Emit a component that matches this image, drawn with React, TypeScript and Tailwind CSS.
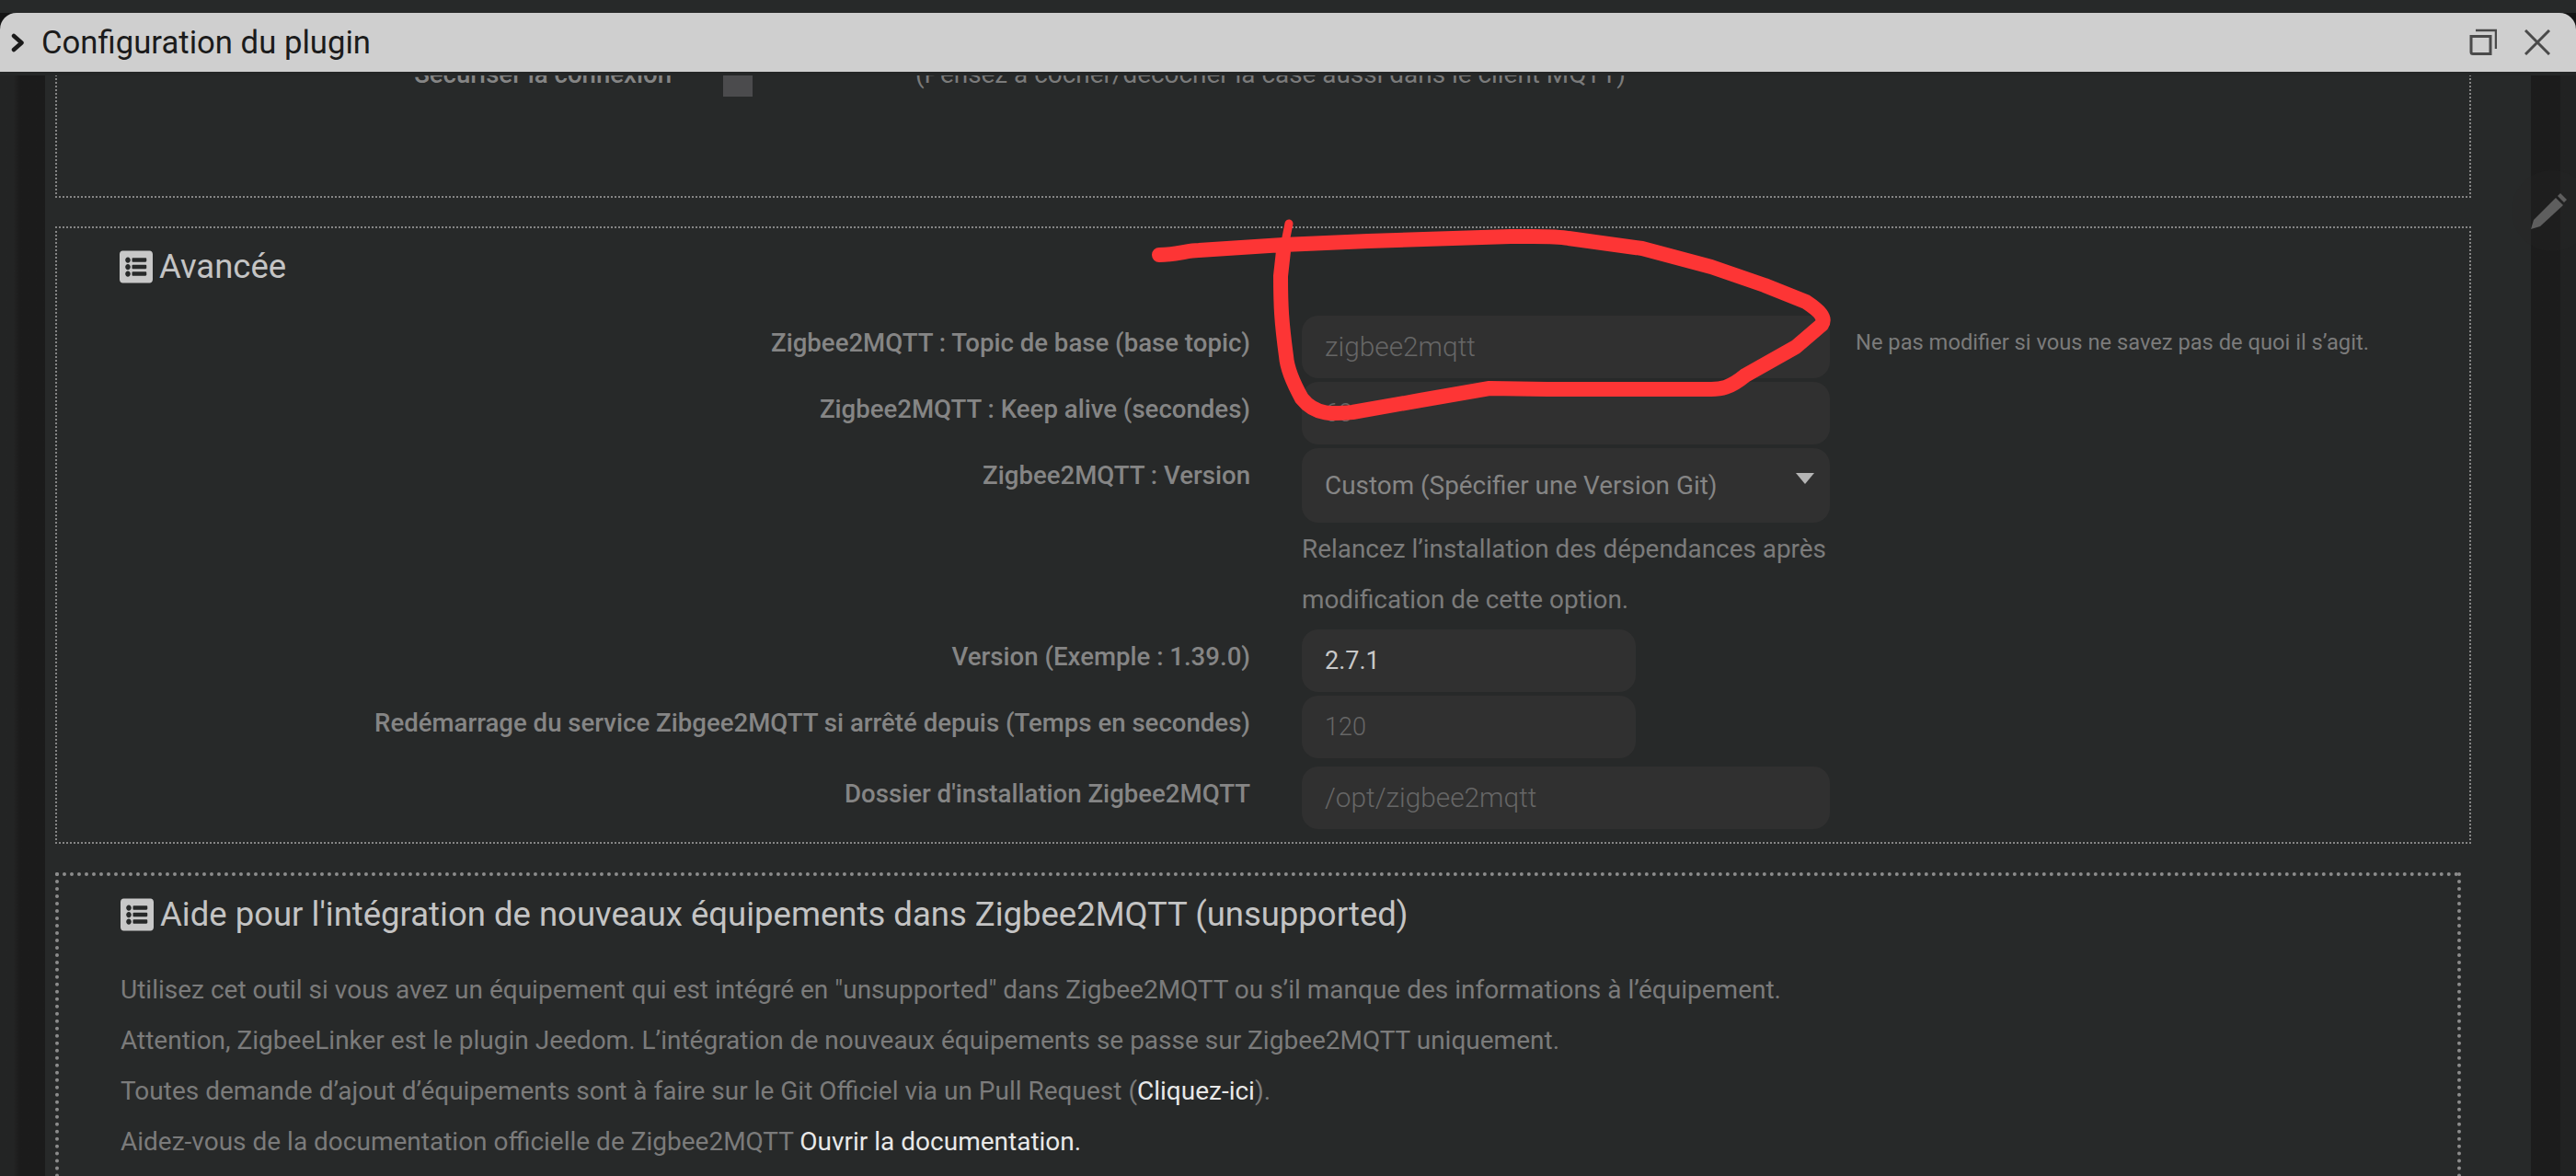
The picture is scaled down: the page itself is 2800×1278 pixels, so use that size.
import { FaListAlt } from "react-icons/fa";

const font = { fontFamily: "Roboto, sans-serif" };

function Heading({ children }: { children: React.ReactNode }) {
  return (
    <div className="flex items-center gap-[7px] text-[36.5px] leading-[44px] text-[#c4c4c4]">
      <FaListAlt preserveAspectRatio="none" className="w-[36px] h-[40px] text-[#c8c8c8] shrink-0" />
      <span>{children}</span>
    </div>
  );
}

function Row({ label, children, className }: { label: string; children: React.ReactNode; className?: string }) {
  return (
    <div className={`flex items-start ${className ?? ""}`}>
      <div className="w-[1297px] shrink-0 pt-[10px] text-right text-[27.6px] leading-[40px] font-medium text-[#858585]">
        {label}
      </div>
      <div className="ml-[56px]">{children}</div>
    </div>
  );
}

function Field({ value, wide = true, strong, digits }: { value: string; wide?: boolean; strong?: boolean; digits?: boolean }) {
  return (
    <div
      className={`h-[68px] rounded-[18px] bg-[#303030] pl-[25px] pt-[1px] flex items-center ${wide ? "w-[574px]" : "w-[363px]"} ${
        strong
          ? "text-[27px] text-[#c8c8c8] font-normal"
          : digits
            ? "text-[27px] font-light text-[#666666]"
            : "text-[29.8px] font-light text-[#666666]"
      }`}
    >
      {value}
    </div>
  );
}

export default function App() {
  return (
    <div className="relative w-[2800px] h-[1278px] overflow-hidden bg-[#272929]" style={font}>
      <div className="h-[14px] bg-[#272929]" />
      <div className="bg-[#141414]">
        <header className="relative z-10 h-[64px] rounded-t-[18px] bg-[#cfcfcf] flex items-center pl-[12px] pr-[28px] shadow-[0_4px_0_#252727]">
          <svg width="15" height="21" viewBox="0 0 15 21" fill="none" stroke="#1a1a1a" strokeWidth="4.5" strokeLinecap="round" strokeLinejoin="round">
            <path d="M3 3l8.5 7.5L3 18" />
          </svg>
          <span className="ml-[18px] text-[34.7px] text-[#1b1b1b] leading-none">Configuration du plugin</span>
          <div className="ml-auto flex items-center gap-[30px] text-[#4a4a4a]">
            <svg width="30" height="30" viewBox="0 0 30 30" fill="none" stroke="currentColor" strokeWidth="3">
              <path d="M2 8.5h21v19H4a2 2 0 0 1-2-2z" />
              <path d="M7 2h22v20" strokeWidth="2.5" />
            </svg>
            <svg width="28" height="28" viewBox="0 0 28 28" fill="none" stroke="currentColor" strokeWidth="3">
              <path d="M1 1l26 26M27 1L1 27" />
            </svg>
          </div>
        </header>
      </div>

      <div className="flex h-[1200px]">
        <div className="w-[49px] shrink-0 bg-gradient-to-r from-[#232424] from-30% to-[#1b1b1b] to-45%" />
        <main className="flex-1 bg-[#272929] pl-[11px] pr-[65px] text-[#7b7b7b]">
          <section className="h-[137px] border-x-2 border-b-2 border-dotted border-[#858585] overflow-hidden">
            <div className="flex items-center -mt-[17px] h-[40px] whitespace-nowrap">
              <div className="w-[668px] text-right text-[27.6px] font-medium text-[#858585]">Sécuriser la connexion</div>
              <div className="ml-[56px] mt-[16px] w-[32px] h-[32px] bg-[#4b4b4d]" />
              <div className="ml-[177px] text-[27.9px] text-[#7b7b7b]">
                (Pensez à cocher/décocher la case aussi dans le client MQTT)
              </div>
            </div>
          </section>

          <section className="mt-[31px] h-[671px] border-2 border-dotted border-[#858585] pl-[68px]">
            <div className="pt-[20px] h-[95px]">
              <Heading>Avancée</Heading>
            </div>
            <div className="-ml-[68px]">
              <Row label="Zigbee2MQTT : Topic de base (base topic)">
                <div className="flex items-center">
                  <Field value="zigbee2mqtt" />
                  <span className="ml-[28px] -mt-[8px] text-[23.7px] text-[#7b7b7b] whitespace-nowrap">
                    Ne pas modifier si vous ne savez pas de quoi il s’agit.
                  </span>
                </div>
              </Row>
              <Row label="Zigbee2MQTT : Keep alive (secondes)" className="mt-[4px]">
                <Field value="60" digits />
              </Row>
              <Row label="Zigbee2MQTT : Version" className="mt-[4px]">
                <div className="relative w-[574px] h-[81px] rounded-[18px] bg-[#303030] pl-[25px] flex items-center text-[27.9px] text-[#858585]">
                  Custom (Spécifier une Version Git)
                  <svg className="absolute right-[17px] top-[27px]" width="20" height="12" viewBox="0 0 20 12">
                    <path d="M0 0h20L10 12z" fill="#b5b5b5" />
                  </svg>
                </div>
                <div className="w-[590px] pt-[1px] text-[27.9px] leading-[55px] text-[#7b7b7b]">
                  Relancez l’installation des dépendances après
                  <br />
                  modification de cette option.
                </div>
              </Row>
              <Row label="Version (Exemple : 1.39.0)" className="mt-[5px]">
                <Field value="2.7.1" wide={false} strong />
              </Row>
              <Row label="Redémarrage du service Zibgee2MQTT si arrêté depuis (Temps en secondes)" className="mt-[4px]">
                <Field value="120" wide={false} digits />
              </Row>
              <Row label="Dossier d'installation Zigbee2MQTT" className="mt-[9px]">
                <Field value="/opt/zigbee2mqtt" />
              </Row>
            </div>
          </section>

          <section className="mt-[31px] mr-[11px] h-[340px] border-4 border-b-0 border-dotted border-[#8c8c8c] pl-[67px] pt-[20px]">
            <Heading>Aide pour l'intégration de nouveaux équipements dans Zigbee2MQTT (unsupported)</Heading>
            <div className="mt-[32px] text-[28px] leading-[55px] text-[#7b7b7b]">
              <p>Utilisez cet outil si vous avez un équipement qui est intégré en "unsupported" dans Zigbee2MQTT ou s’il manque des informations à l’équipement.</p>
              <p>Attention, ZigbeeLinker est le plugin Jeedom. L’intégration de nouveaux équipements se passe sur Zigbee2MQTT uniquement.</p>
              <p>
                Toutes demande d’ajout d’équipements sont à faire sur le Git Officiel via un Pull Request (
                <span className="text-[#e8e8e8]">Cliquez-ici</span>).
              </p>
              <p>
                Aidez-vous de la documentation officielle de Zigbee2MQTT <span className="text-[#e8e8e8]">Ouvrir la documentation.</span>
              </p>
            </div>
          </section>
        </main>
        <div className="w-[49px] shrink-0 bg-gradient-to-r from-[#1c1c1c] from-65% to-[#212222] to-65%" />
      </div>

      <div className="absolute left-[2730px] top-[185px] w-[88px] h-[88px] rounded-full bg-[#2a2a2a]/20 flex items-center justify-center">
        <svg className="-ml-[6px]" width="40" height="40" viewBox="0 0 40 40">
          <path d="M0 40l3-10L27 6l8 8L10 37z" fill="#5e5e5e" />
          <path d="M29 4l3-3 7 7-3 3z" fill="#5e5e5e" />
        </svg>
      </div>

      <svg className="absolute left-0 top-0 pointer-events-none" width="2800" height="1278" fill="none">
        <path d="M1395 273 L1401 243" stroke="#fd3535" strokeWidth="9" strokeLinecap="round" />
        <path
          d="M1260 277 C1280 277 1290 272 1303 272 L1395 266 L1487 262 L1642 257 C1670 257 1690 256 1705 259 L1785 270 L1860 290 L1918 310 L1963 328 C1978 338 1985 345 1980 353 L1952 377 L1897 408 C1880 422 1870 423 1860 423 L1774 423 L1682 423 L1619 422 L1544 435 L1470 448 C1450 450 1430 452 1415 433 C1405 415 1399 400 1398 387 C1393 350 1392 333 1392 300 L1395 273"
          stroke="#fd3535"
          strokeWidth="16"
          strokeLinecap="round"
          strokeLinejoin="round"
        />
      </svg>
    </div>
  );
}
